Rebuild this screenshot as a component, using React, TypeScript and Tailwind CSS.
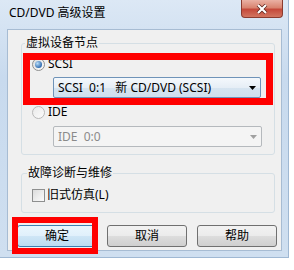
import React from 'react';

function Radio({ checked }: { checked?: boolean }) {
  return (
    <span
      className={`w-[13px] h-[13px] rounded-full border flex items-center justify-center ${
        checked
          ? 'border-[#8e8f8f] bg-[linear-gradient(135deg,#dcdcdc,#fbfbfb)]'
          : 'border-[#b9b9b9] bg-[linear-gradient(135deg,#e9e9e9,#fcfcfc)]'
      }`}
    >
      {checked && (
        <span className="w-[7px] h-[7px] rounded-full bg-[radial-gradient(circle_at_35%_35%,#b8ddf8,#2a66ad_75%)]" />
      )}
    </span>
  );
}

function Arrow({ color }: { color: string }) {
  return (
    <svg width="7" height="4" viewBox="0 0 7 4">
      <path d="M0 0h7L3.5 4z" fill={color} />
    </svg>
  );
}

function Button({ label, primary }: { label: string; primary?: boolean }) {
  return (
    <button
      className={`w-[80px] h-[22px] rounded-[3px] border text-[12px] leading-[16px] text-black ${
        primary
          ? 'border-[#3c7fb1] bg-[linear-gradient(#eaf6fd,#e0f0fb_50%,#cfe6f6_50%,#bddcf0)]'
          : 'border-[#707070] bg-[linear-gradient(#f2f2f2,#ebebeb_50%,#dddddd_50%,#cfcfcf)]'
      }`}
    >
      {label}
    </button>
  );
}

export default function App() {
  return (
    <div className="w-[294px] h-[270px] bg-white relative overflow-hidden font-['Noto_Sans','Noto_Sans_CJK_SC',sans-serif] text-black">
      <div className="w-[289px] h-[258px] flex flex-col border-r border-b border-[#9fb8d3] bg-[linear-gradient(#dce8f5,#c8daee_30%,#cfdff0)]">
        {/* title bar */}
        <div className="h-[29px] flex items-start justify-between">
          <span className="pl-[9px] pt-[5px] text-[12px] leading-[16px]">CD/DVD 高级设置</span>
          <div className="mr-[5px] w-[42px] h-[18px] rounded-b-[4px] border border-t-0 border-[#8b3b2f] bg-[linear-gradient(#eab1a4,#d98470_45%,#c5493a_55%,#d27560)] flex items-center justify-center">
            <svg width="12" height="10" viewBox="0 0 12 10">
              <path d="M2 1l8 8M10 1l-8 8" stroke="#5a2018" strokeWidth="3.6" />
              <path d="M2 1l8 8M10 1l-8 8" stroke="#fff" strokeWidth="2.2" />
            </svg>
          </div>
        </div>

        {/* client area */}
        <div className="ml-[7px] mr-[6px] mb-[6px] flex-1 flex flex-col bg-[#f0f0f0] border border-[#a7bcd3]">
          <fieldset className="ml-[13px] mt-[5px] w-[254px] border border-[#d5dfe5] rounded-[3px] pb-[7px]">
            <legend className="ml-[3px] px-[1px] text-[12px] leading-[16px]">虚拟设备节点</legend>
            <div className="mt-[5px] h-[16px] ml-[10px] flex items-center gap-[3px]">
              <Radio checked />
              <span className="text-[12px] leading-[16px]">SCSI</span>
            </div>
            <div className="mt-[5px] ml-[31px] w-[208px] h-[21px] rounded-[2px] border border-[#6f93b8] bg-[linear-gradient(#f4f8fc,#e6eef6_50%,#d6e4f0_50%,#cfdfee)] flex items-center pl-[4px] pr-[4px]">
              <span className="flex-1 text-[12px] leading-[16px] whitespace-pre">SCSI  0:1   新 CD/DVD (SCSI)</span>
              <Arrow color="#000" />
            </div>
            <div className="mt-[6px] h-[16px] ml-[10px] flex items-center gap-[3px]">
              <Radio />
              <span className="text-[12px] leading-[16px]">IDE</span>
            </div>
            <div className="mt-[6px] ml-[31px] w-[209px] h-[21px] rounded-[2px] border border-[#b5b9bd] bg-[#f4f4f4] flex items-center pl-[4px] pr-[4px]">
              <span className="flex-1 text-[12px] leading-[16px] whitespace-pre text-[#8a8a8a]">IDE  0:0</span>
              <Arrow color="#a0a0a0" />
            </div>
          </fieldset>

          <fieldset className="ml-[13px] mt-[10px] w-[254px] border border-[#d5dfe5] rounded-[3px] pb-[9px]">
            <legend className="ml-[5px] px-[1px] text-[12px] leading-[16px]">故障诊断与维修</legend>
            <div className="mt-[6px] h-[16px] ml-[10px] flex items-center gap-[2px]">
              <span className="w-[13px] h-[13px] border border-[#8e8f8f] bg-[linear-gradient(135deg,#dcdcdc,#fbfbfb)]" />
              <span className="text-[12px] leading-[16px]">旧式仿真(L)</span>
            </div>
          </fieldset>

          <div className="mt-[12px] ml-[9px] flex gap-[10px]">
            <Button label="确定" primary />
            <Button label="取消" />
            <Button label="帮助" />
          </div>
        </div>
      </div>

      {/* red annotation boxes */}
      <div className="absolute left-[23px] top-[53px] w-[250px] h-[52px] border-[7px] border-[#ff0000]" />
      <div className="absolute left-[12px] top-[217px] w-[86px] h-[37px] border-[6px] border-[#ff0000]" />
    </div>
  );
}
